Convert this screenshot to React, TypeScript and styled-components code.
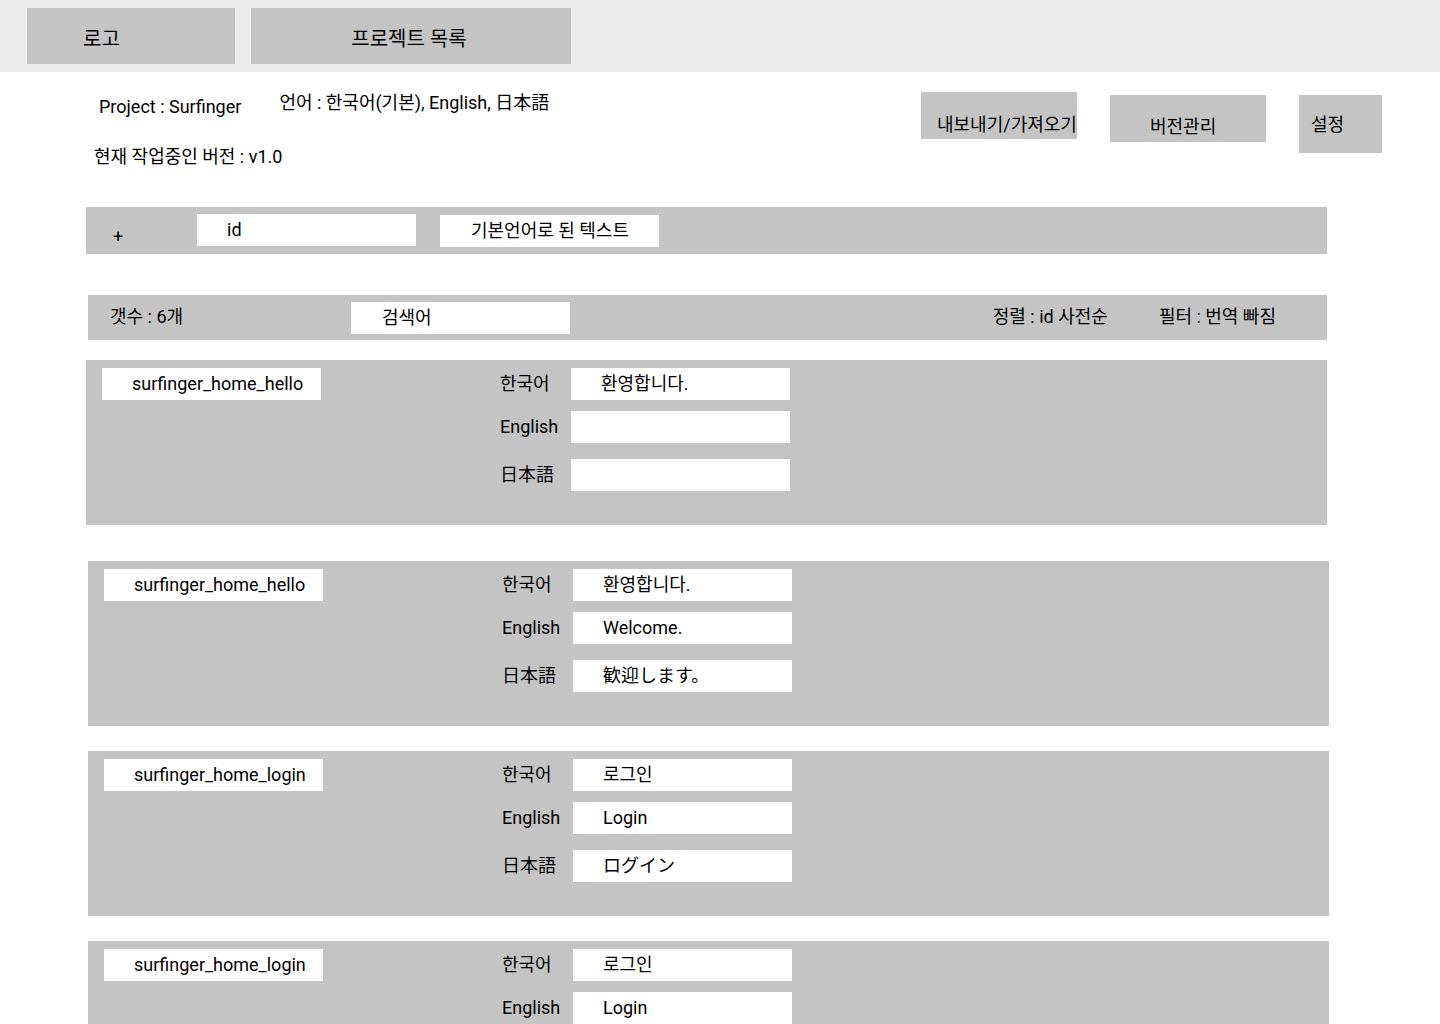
import React from "react";
import styled, { createGlobalStyle } from "styled-components";

const GlobalStyle = createGlobalStyle`
  html, body {
    margin: 0;
    padding: 0;
    background: #ffffff;
  }
  body {
    font-family: Roboto, "Noto Sans CJK KR", "Noto Sans CJK JP", sans-serif;
    font-size: 18px;
    line-height: 24px;
    color: #000000;
  }
  * { box-sizing: border-box; }
`;

const Page = styled.div`
  width: 1440px;
  display: flex;
  flex-direction: column;
`;

const Header = styled.header`
  height: 72px;
  background: #ebebeb;
  display: flex;
  align-items: flex-start;
  gap: 16px;
  padding: 8px 0 0 27px;
`;

const NavBox = styled.div<{ $w: number; $padLeft?: number }>`
  width: ${(p) => p.$w}px;
  height: 56px;
  background: #c4c4c4;
  display: flex;
  align-items: center;
  font-size: 20px;
  padding-top: 5px;
  justify-content: ${(p) => (p.$padLeft !== undefined ? "flex-start" : "center")};
  padding-left: ${(p) => p.$padLeft ?? 0}px;
  padding-right: ${(p) => (p.$padLeft !== undefined ? 0 : 4)}px;
`;

const InfoSection = styled.section`
  height: 135px;
  display: flex;
  justify-content: space-between;
  padding: 0 58px 0 94px;
`;

const Meta = styled.div`
  display: flex;
  flex-direction: column;
  padding-top: 19px;
`;

const MetaRow = styled.div`
  display: flex;
  align-items: flex-start;
`;

const MetaText = styled.span<{ $top?: number; $left?: number }>`
  margin-top: ${(p) => p.$top ?? 0}px;
  margin-left: ${(p) => p.$left ?? 0}px;
  white-space: nowrap;
`;

const VersionRow = styled.div`
  margin-top: 26px;
`;

const Actions = styled.div`
  display: flex;
  align-items: flex-start;
  gap: 33px;
  padding-top: 20px;
`;

const ActionButton = styled.div<{ $w: number; $h: number; $top: number; $padLeft: number; $padTop: number }>`
  width: ${(p) => p.$w}px;
  height: ${(p) => p.$h}px;
  margin-top: ${(p) => p.$top}px;
  background: #c4c4c4;
  padding-left: ${(p) => p.$padLeft}px;
  padding-top: ${(p) => p.$padTop}px;
  white-space: nowrap;
`;

const Bar = styled.div<{ $left: number; $w: number; $h: number }>`
  margin-left: ${(p) => p.$left}px;
  width: ${(p) => p.$w}px;
  height: ${(p) => p.$h}px;
  background: #c4c4c4;
  display: flex;
  align-items: flex-start;
`;

const AddBar = styled(Bar)`
  padding-left: 27px;
`;

const PlusMark = styled.span`
  width: 84px;
  margin-top: 18px;
`;

const Field = styled.div<{ $top?: number; $pad?: number }>`
  width: 219px;
  height: 32px;
  background: #ffffff;
  margin-top: ${(p) => p.$top ?? 0}px;
  padding-left: ${(p) => p.$pad ?? 30}px;
  display: flex;
  align-items: center;
  white-space: nowrap;
`;

const FieldGap = styled.div`
  width: 24px;
`;

const FilterBar = styled(Bar)`
  margin-top: 41px;
  padding: 0 51px 0 22px;
`;

const CountLabel = styled.span`
  width: 241px;
  margin-top: 10px;
  white-space: nowrap;
`;

const FilterGroup = styled.div`
  margin-left: auto;
  display: flex;
  gap: 51px;
  margin-top: 10px;
  white-space: nowrap;
`;

const CardList = styled.div`
  display: flex;
  flex-direction: column;
  padding-bottom: 40px;
`;

const Card = styled.div<{ $left: number; $top: number }>`
  margin-left: ${(p) => p.$left}px;
  margin-top: ${(p) => p.$top}px;
  width: 1241px;
  height: 165px;
  background: #c4c4c4;
  padding: 8px 0 0 16px;
  display: flex;
  align-items: flex-start;
`;

const Translations = styled.div`
  margin-left: 179px;
  display: flex;
  flex-direction: column;
`;

const LangRow = styled.div<{ $top: number }>`
  display: flex;
  align-items: center;
  margin-top: ${(p) => p.$top}px;
`;

const LangLabel = styled.span`
  width: 71px;
  white-space: nowrap;
`;

type Entry = { id: string; ko: string; en: string; ja: string };

const entries: { e: Entry; left: number; top: number }[] = [
  { e: { id: "surfinger_home_hello", ko: "환영합니다.", en: "", ja: "" }, left: 86, top: 20 },
  { e: { id: "surfinger_home_hello", ko: "환영합니다.", en: "Welcome.", ja: "歓迎します。" }, left: 88, top: 36 },
  { e: { id: "surfinger_home_login", ko: "로그인", en: "Login", ja: "ログイン" }, left: 88, top: 25 },
  { e: { id: "surfinger_home_login", ko: "로그인", en: "Login", ja: "ログイン" }, left: 88, top: 25 },
];

export default function App() {
  return (
    <>
      <GlobalStyle />
      <Page>
        <Header>
          <NavBox $w={208} $padLeft={56}>로고</NavBox>
          <NavBox $w={320}>프로젝트 목록</NavBox>
        </Header>

        <InfoSection>
          <Meta>
            <MetaRow>
              <MetaText $top={4} $left={5}>Project : Surfinger</MetaText>
              <MetaText $left={38}>언어 : 한국어(기본), English, 日本語</MetaText>
            </MetaRow>
            <VersionRow>현재 작업중인 버전 : v1.0</VersionRow>
          </Meta>
          <Actions>
            <ActionButton $w={156} $h={47} $top={0} $padLeft={16} $padTop={21}>
              내보내기/가져오기
            </ActionButton>
            <ActionButton $w={156} $h={47} $top={3} $padLeft={40} $padTop={20}>
              버전관리
            </ActionButton>
            <ActionButton $w={83} $h={58} $top={3} $padLeft={12} $padTop={18}>
              설정
            </ActionButton>
          </Actions>
        </InfoSection>

        <AddBar $left={86} $w={1241} $h={47}>
          <PlusMark>+</PlusMark>
          <Field $top={7}>id</Field>
          <FieldGap />
          <Field $top={8} $pad={31}>기본언어로 된 텍스트</Field>
        </AddBar>

        <FilterBar $left={88} $w={1239} $h={45}>
          <CountLabel>갯수 : 6개</CountLabel>
          <Field $top={7} $pad={31}>검색어</Field>
          <FilterGroup>
            <span>정렬 : id 사전순</span>
            <span>필터 : 번역 빠짐</span>
          </FilterGroup>
        </FilterBar>

        <CardList>
          {entries.map(({ e, left, top }, i) => (
            <Card key={i} $left={left} $top={top}>
              <Field>{e.id}</Field>
              <Translations>
                <LangRow $top={0}>
                  <LangLabel>한국어</LangLabel>
                  <Field>{e.ko}</Field>
                </LangRow>
                <LangRow $top={11}>
                  <LangLabel>English</LangLabel>
                  <Field>{e.en}</Field>
                </LangRow>
                <LangRow $top={16}>
                  <LangLabel>日本語</LangLabel>
                  <Field>{e.ja}</Field>
                </LangRow>
              </Translations>
            </Card>
          ))}
        </CardList>
      </Page>
    </>
  );
}
